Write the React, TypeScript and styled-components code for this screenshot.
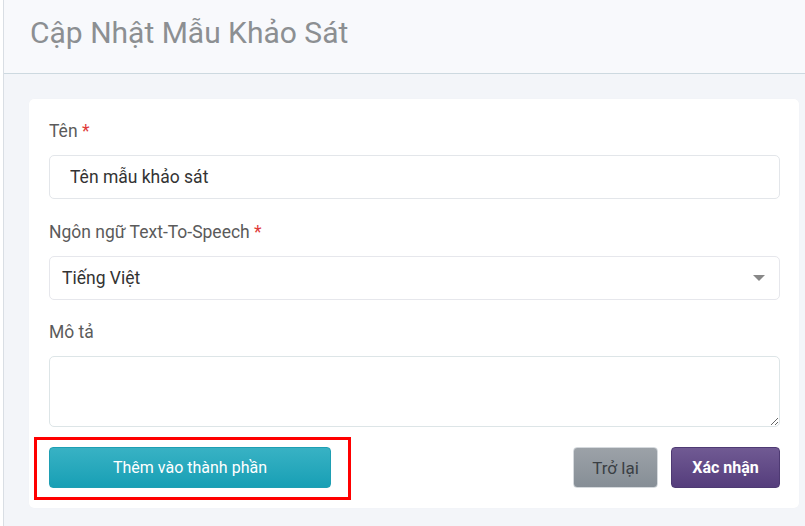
import React from "react";
import styled, { createGlobalStyle } from "styled-components";

const Global = createGlobalStyle`
  html, body { margin: 0; padding: 0; background: #ffffff; }
  body { font-family: Roboto, "Noto Sans", "Liberation Sans", sans-serif; }
  * { box-sizing: border-box; }
`;

const Page = styled.div`
  margin-left: 3px;
  border-left: 1px solid #d9dee4;
  min-height: 526px;
  background: #f3f5f9;
  display: flex;
  flex-direction: column;
`;

const Header = styled.header`
  height: 74px;
  background: #f8f9fc;
  border-bottom: 1px solid #cdd9e0;
  padding-left: 26px;
  display: flex;
  align-items: center;
`;

const Title = styled.h1`
  margin: 0;
  font-size: 30px;
  font-weight: 400;
  color: #8c8f92;
  padding-bottom: 9px;
`;

const Body = styled.main`
  padding: 25px 6px 18px 25px;
`;

const Card = styled.section`
  background: #ffffff;
  border-radius: 5px;
  padding: 20px 19px 20px 20px;
  box-shadow: 0 0 1px rgba(0, 0, 0, 0.04);
`;

const Group = styled.div<{ $gap?: number }>`
  margin-bottom: ${(p) => p.$gap ?? 20}px;
`;

const Label = styled.label`
  display: block;
  font-size: 17.5px;
  line-height: 24px;
  color: #5b5b5b;
  margin-bottom: 12px;
`;

const Star = styled.span`
  color: #e03a3a;
`;

const Input = styled.input<{ $indent?: number }>`
  display: block;
  width: 100%;
  height: 44px;
  border: 1px solid #e3e6ea;
  border-radius: 5px;
  padding: 0 12px 0 ${(p) => p.$indent ?? 12}px;
  font-family: inherit;
  font-size: 17.5px;
  color: #333333;
  background: #fff;
  outline: none;
`;

const SelectBox = styled.div`
  position: relative;
  height: 44px;
  border: 1px solid #e6e7ec;
  border-radius: 5px;
  padding: 0 12px;
  display: flex;
  align-items: center;
  justify-content: space-between;
  font-size: 17.5px;
  color: #333333;
  background: #fff;
`;

const Caret = styled.span`
  width: 0;
  height: 0;
  border-left: 6px solid transparent;
  border-right: 6px solid transparent;
  border-top: 6px solid #888888;
  margin-right: 2px;
`;

const TextArea = styled.textarea`
  display: block;
  width: 100%;
  height: 71px;
  border: 1px solid #dde5e7;
  border-radius: 5px;
  font-family: inherit;
  font-size: 16px;
  padding: 8px 12px;
  resize: vertical;
  outline: none;
`;

const Actions = styled.div`
  display: flex;
  align-items: center;
  gap: 13px;
`;

const Highlight = styled.span`
  position: relative;
  display: inline-flex;
  margin-right: auto;
  &::after {
    content: "";
    position: absolute;
    left: -15px;
    top: -10px;
    right: -20px;
    bottom: -12px;
    border: 3px solid #ff0000;
    pointer-events: none;
  }
`;

type Variant = "info" | "secondary" | "primary";

const Button = styled.button<{ $variant: Variant; $width: number }>`
  height: 41px;
  width: ${(p) => p.$width}px;
  border-radius: 4px;
  font-family: inherit;
  font-size: ${(p) => (p.$variant === "secondary" ? 17 : 16)}px;
  font-weight: ${(p) => (p.$variant === "primary" ? 700 : 400)};
  cursor: pointer;
  border: 1px solid
    ${(p) =>
      p.$variant === "info" ? "#1e9fb3" : p.$variant === "secondary" ? "#d5d9dd" : "#4e3a73"};
  color: ${(p) => (p.$variant === "secondary" ? "#3a3f44" : "#ffffff")};
  background: ${(p) =>
    p.$variant === "info"
      ? "linear-gradient(#38b2c4, #189fb5)"
      : p.$variant === "secondary"
      ? "linear-gradient(#9ca2a8, #868e96)"
      : "linear-gradient(#705a93, #553d7c)"};
`;

export default function App() {
  return (
    <>
      <Global />
      <Page>
        <Header>
          <Title>Cập Nhật Mẫu Khảo Sát</Title>
        </Header>
        <Body>
          <Card>
            <Group $gap={21}>
              <Label>
                Tên <Star>*</Star>
              </Label>
              <Input $indent={20} defaultValue="Tên mẫu khảo sát" />
            </Group>
            <Group>
              <Label>
                Ngôn ngữ Text-To-Speech <Star>*</Star>
              </Label>
              <SelectBox>
                <span>Tiếng Việt</span>
                <Caret />
              </SelectBox>
            </Group>
            <Group>
              <Label>Mô tả</Label>
              <TextArea />
            </Group>
            <Actions>
              <Highlight>
                <Button $variant="info" $width={282}>
                  Thêm vào thành phần
                </Button>
              </Highlight>
              <Button $variant="secondary" $width={85}>
                Trở lại
              </Button>
              <Button $variant="primary" $width={109}>
                Xác nhận
              </Button>
            </Actions>
          </Card>
        </Body>
      </Page>
    </>
  );
}
